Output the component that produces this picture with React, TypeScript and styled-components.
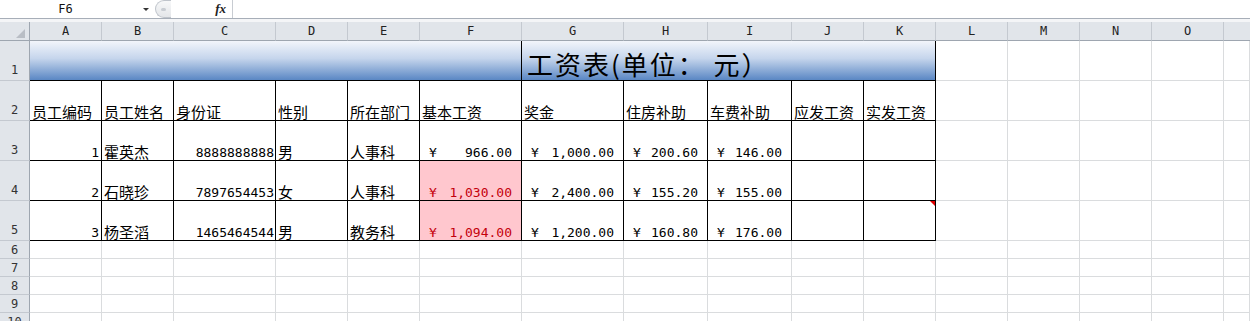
import React from 'react';
import styled, { createGlobalStyle } from 'styled-components';

const GlobalStyle = createGlobalStyle`
  html, body {
    margin: 0;
    padding: 0;
    background: #fff;
    overflow: hidden;
  }
  body {
    font-family: "Noto Sans CJK SC", "Liberation Sans", sans-serif;
  }
`;

const COL_WIDTHS = [72, 72, 102, 72, 72, 102, 102, 84, 84, 72, 72, 72, 72, 72, 72];
const LETTERS = 'ABCDEFGHIJKLMNO'.split('');
const TABLE_COLS = 11; // A..K carry the black borders
const GRID = '#dadcde';
const HEAD_BG = '#e1e5ea';
const HEAD_LINE = '#c4c9d0';
const HEAD_EDGE = '#9ea6b0';

const Page = styled.div`
  width: 1250px;
  height: 321px;
  overflow: hidden;
  background: #fff;
`;

/* ---------- formula bar ---------- */

const FormulaBar = styled.div`
  display: flex;
  height: 18px;
  border-bottom: 1px solid #a7aeb8;
`;

const NameBox = styled.div`
  width: 131px;
  font: 12px/18px "DejaVu Sans Mono", monospace;
  text-align: center;
  color: #111;
`;

const ArrowBox = styled.div`
  width: 24px;
  display: flex;
  align-items: center;
  padding-left: 12px;
  box-sizing: border-box;

  &::after {
    content: '';
    border-left: 3px solid transparent;
    border-right: 3px solid transparent;
    border-top: 3px solid #333;
  }
`;

const Knob = styled.div`
  width: 16px;
  box-sizing: border-box;
  border: 1px solid #bfc4cb;
  border-right: none;
  border-radius: 9px 0 0 9px;
  background: linear-gradient(#f7f8f9, #e4e6e9);
  display: flex;
  align-items: center;
  justify-content: center;

  &::after {
    content: '';
    width: 5px;
    height: 3px;
    border-radius: 2px;
    background: #c9cdd3;
  }
`;

const FxBox = styled.div`
  width: 62px;
  box-sizing: border-box;
  border-right: 1px solid #c8ccd2;
  display: flex;
  justify-content: flex-end;
  align-items: center;
  padding-right: 6px;
  font: italic bold 13px "Liberation Serif", serif;
  color: #222;
`;

const FormulaInput = styled.div`
  flex: 1;
`;

const Gap = styled.div`
  height: 3px;
  background: #f4f5f7;
`;

/* ---------- sheet grid ---------- */

const Sheet = styled.div`
  display: grid;
  grid-template-columns: 30px ${COL_WIDTHS.map((w) => `${w}px`).join(' ')} 1fr;
  grid-template-rows: 19px repeat(5, 40px) repeat(5, 18px);
`;

const Corner = styled.div`
  box-sizing: border-box;
  background: ${HEAD_BG};
  border-right: 1px solid ${HEAD_EDGE};
  border-bottom: 1px solid ${HEAD_EDGE};
  display: flex;
  align-items: flex-end;
  justify-content: flex-end;
  padding: 0 4px 2px 0;
`;

const ColHead = styled.div<{ $last?: boolean }>`
  box-sizing: border-box;
  background: ${HEAD_BG};
  border-right: ${({ $last }) => ($last ? 'none' : `1px solid ${HEAD_LINE}`)};
  border-bottom: 1px solid ${HEAD_EDGE};
  font: 12px/18px "DejaVu Sans Mono", monospace;
  color: #222;
  text-align: center;
`;

const RowHead = styled.div<{ $tall?: boolean }>`
  box-sizing: border-box;
  background: ${HEAD_BG};
  border-right: 1px solid ${HEAD_EDGE};
  border-bottom: 1px solid ${HEAD_LINE};
  font: 12px/12px "DejaVu Sans Mono", monospace;
  color: #333;
  display: flex;
  justify-content: center;
  align-items: ${({ $tall }) => ($tall ? 'flex-end' : 'center')};
  padding-bottom: ${({ $tall }) => ($tall ? '4px' : '0')};
`;

const Cell = styled.div<{
  $black?: boolean;
  $bg?: string;
  $justify?: 'flex-start' | 'flex-end' | 'space-between';
  $pad?: string;
  $span?: number;
}>`
  position: relative;
  box-sizing: border-box;
  min-width: 0;
  grid-column: ${({ $span }) => ($span ? `span ${$span}` : 'auto')};
  border-right: 1px solid ${({ $black }) => ($black ? '#000' : GRID)};
  border-bottom: 1px solid ${({ $black }) => ($black ? '#000' : GRID)};
  background: ${({ $bg }) => $bg || '#fff'};
  display: flex;
  align-items: flex-end;
  justify-content: ${({ $justify }) => $justify || 'flex-start'};
  padding: ${({ $pad }) => $pad || '0 2px'};
  white-space: nowrap;
  overflow: visible;
`;

const TitleCell = styled(Cell)`
  background: linear-gradient(#f2f5fb 0%, #c5d5ec 45%, #5a87c4 100%);
`;

const Title = styled.span`
  font: 26px/26px "Noto Sans CJK SC", sans-serif;
  letter-spacing: 2px;
  color: #000;
  padding: 0 0 3px 5px;
  white-space: pre;
`;

const Txt = styled.span`
  font: 15px/15px "Noto Sans CJK SC", sans-serif;
  color: #000;
  padding-bottom: 1px;
`;

const Num = styled.span<{ $red?: boolean }>`
  font: 13px/12px "DejaVu Sans Mono", monospace;
  color: ${({ $red }) => ($red ? '#c4000c' : '#000')};
  padding-bottom: 1px;
`;

const CommentMark = styled.div`
  position: absolute;
  top: 0;
  right: 0;
  width: 0;
  height: 0;
  border-top: 5px solid #e00000;
  border-left: 5px solid transparent;
`;

type Row = {
  id: string;
  name: string;
  card: string;
  sex: string;
  dept: string;
  base: string;
  baseRed?: boolean;
  bonus: string;
  house: string;
  car: string;
};

const HEADERS = ['员工编码', '员工姓名', '身份证', '性别', '所在部门', '基本工资', '奖金', '住房补助', '车费补助', '应发工资', '实发工资'];

const ROWS: Row[] = [
  { id: '1', name: '霍英杰', card: '8888888888', sex: '男', dept: '人事科', base: '966.00', bonus: '1,000.00', house: '200.60', car: '146.00' },
  { id: '2', name: '石晓珍', card: '7897654453', sex: '女', dept: '人事科', base: '1,030.00', baseRed: true, bonus: '2,400.00', house: '155.20', car: '155.00' },
  { id: '3', name: '杨圣滔', card: '1465464544', sex: '男', dept: '教务科', base: '1,094.00', baseRed: true, bonus: '1,200.00', house: '160.80', car: '176.00' },
];

const PlainTail: React.FC<{ from: number }> = ({ from }) => (
  <>
    {Array.from({ length: LETTERS.length + 1 - from }, (_, i) => (
      <Cell key={`t${from + i}`} />
    ))}
  </>
);

const Money: React.FC<{ value: string; red?: boolean }> = ({ value, red }) => (
  <Cell
    $black
    $justify="space-between"
    $pad="0 9px"
    $bg={red ? '#ffc7ce' : undefined}
  >
    <Num $red={red}>¥</Num>
    <Num $red={red}>{value}</Num>
  </Cell>
);

const CornerMark = () => (
  <svg width="9" height="9" viewBox="0 0 9 9">
    <polygon points="9,0 9,9 0,9" fill="#b9bec5" />
  </svg>
);

export default function App() {
  return (
    <Page>
      <GlobalStyle />
      <FormulaBar>
        <NameBox>F6</NameBox>
        <ArrowBox />
        <Knob />
        <FxBox>fx</FxBox>
        <FormulaInput />
      </FormulaBar>
      <Gap />
      <Sheet>
        <Corner>
          <CornerMark />
        </Corner>
        {LETTERS.map((l) => (
          <ColHead key={l}>{l}</ColHead>
        ))}
        <ColHead $last />

        {/* row 1: title band */}
        <RowHead $tall>1</RowHead>
        <TitleCell $black $span={6} />
        <TitleCell $black $span={5} $pad="0">
          <Title>工资表(单位： 元）</Title>
        </TitleCell>
        <PlainTail from={TABLE_COLS} />

        {/* row 2: headings */}
        <RowHead $tall>2</RowHead>
        {HEADERS.map((h) => (
          <Cell key={h} $black>
            <Txt>{h}</Txt>
          </Cell>
        ))}
        <PlainTail from={TABLE_COLS} />

        {/* rows 3-5: data */}
        {ROWS.map((r, idx) => (
          <React.Fragment key={r.id}>
            <RowHead $tall>{idx + 3}</RowHead>
            <Cell $black $justify="flex-end">
              <Num>{r.id}</Num>
            </Cell>
            <Cell $black>
              <Txt>{r.name}</Txt>
            </Cell>
            <Cell $black $justify="flex-end" $pad="0 1px">
              <Num>{r.card}</Num>
            </Cell>
            <Cell $black>
              <Txt>{r.sex}</Txt>
            </Cell>
            <Cell $black>
              <Txt>{r.dept}</Txt>
            </Cell>
            <Money value={r.base} red={r.baseRed} />
            <Money value={r.bonus} />
            <Money value={r.house} />
            <Money value={r.car} />
            <Cell $black />
            <Cell $black>{idx === 2 && <CommentMark />}</Cell>
            <PlainTail from={TABLE_COLS} />
          </React.Fragment>
        ))}

        {/* rows 6-10: empty */}
        {[6, 7, 8, 9, 10].map((n) => (
          <React.Fragment key={n}>
            <RowHead>{n}</RowHead>
            {Array.from({ length: TABLE_COLS }, (_, i) => (
              <Cell key={i} />
            ))}
            <PlainTail from={TABLE_COLS} />
          </React.Fragment>
        ))}
      </Sheet>
    </Page>
  );
}
